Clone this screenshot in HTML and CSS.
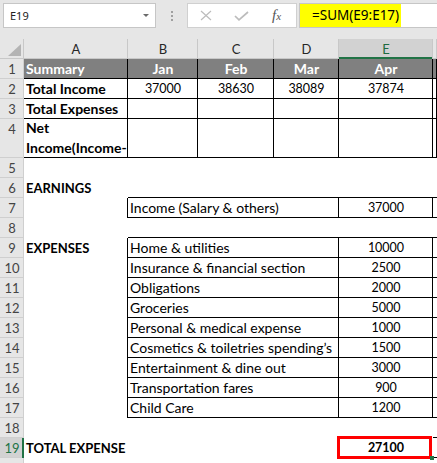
FILE: index.html
```html
<!DOCTYPE html>
<html>
<head>
<meta charset="utf-8">
<link rel="stylesheet" href="styles.css">
</head>
<body>
<div class="toolbar">
  <div class="namebox"><span>E19</span><span class="caret"></span></div>
  <div class="grip"><i></i><i></i><i></i></div>
  <div class="fbtns">
    <svg class="ico-x" width="12" height="11" viewBox="0 0 12 11"><path d="M1 1 L11 10 M11 1 L1 10" stroke="#bcbcbc" stroke-width="1.2" fill="none"/></svg>
    <svg class="ico-ok" width="15" height="10" viewBox="0 0 15 10"><path d="M1 5 L5 8.8 L14 1" stroke="#bcbcbc" stroke-width="1.7" fill="none"/></svg>
    <span class="fx">f<span class="fx-x">x</span></span>
  </div>
  <div class="finput"><span class="formula">=SUM(E9:E17)</span></div>
</div>

<div class="sheet">
  <div class="corner"><span class="tri"></span></div>
  <div class="ch">A</div><div class="ch">B</div><div class="ch">C</div><div class="ch">D</div><div class="ch sel">E</div><div class="ch"></div>

  <div class="rh">1</div>
  <div class="c sum lrb">Summary</div><div class="c sum ctr lrb">Jan</div><div class="c sum ctr lrb">Feb</div><div class="c sum ctr lrb">Mar</div><div class="c sum ctr lrb">Apr</div><div class="c sum lrb"></div>

  <div class="rh">2</div>
  <div class="c bold lrb">Total Income</div><div class="c num ctr lrb">37000</div><div class="c num ctr lrb">38630</div><div class="c num ctr lrb">38089</div><div class="c num ctr lrb">37874</div><div class="c lrb"></div>

  <div class="rh">3</div>
  <div class="c bold lrb">Total Expenses</div><div class="c lrb"></div><div class="c lrb"></div><div class="c lrb"></div><div class="c lrb"></div><div class="c lrb"></div>

  <div class="rh">4</div>
  <div class="c bold lrb wrap"><span>Net<br>Income(Income-</span></div><div class="c lrb"></div><div class="c lrb"></div><div class="c lrb"></div><div class="c lrb"></div><div class="c lrb"></div>

  <div class="rh">5</div>
  <div class="c"></div><div class="c"></div><div class="c"></div><div class="c"></div><div class="c"></div><div class="c"></div>

  <div class="rh">6</div>
  <div class="c bold caps">EARNINGS</div><div class="c lb"></div><div class="c lb"></div><div class="c lb"></div><div class="c lb"></div><div class="c lb"></div>

  <div class="rh">7</div>
  <div class="c lr"></div><div class="c m3 lrb">Income (Salary &amp; others)</div><div class="c num ctr lrb">37000</div><div class="c lb"></div>

  <div class="rh">8</div>
  <div class="c"></div><div class="c lb"></div><div class="c lb"></div><div class="c lb"></div><div class="c lb"></div><div class="c lb"></div>

  <div class="rh">9</div>
  <div class="c bold caps lr">EXPENSES</div><div class="c m3 lrb">Home &amp; utilities</div><div class="c num ctr lrb">10000</div><div class="c lb"></div>

  <div class="rh">10</div>
  <div class="c lr"></div><div class="c m3 lrb">Insurance &amp; financial section</div><div class="c num ctr lrb">2500</div><div class="c lb"></div>

  <div class="rh">11</div>
  <div class="c lr"></div><div class="c m3 lrb">Obligations</div><div class="c num ctr lrb">2000</div><div class="c lb"></div>

  <div class="rh">12</div>
  <div class="c lr"></div><div class="c m3 lrb">Groceries</div><div class="c num ctr lrb">5000</div><div class="c lb"></div>

  <div class="rh">13</div>
  <div class="c lr"></div><div class="c m3 lrb">Personal &amp; medical expense</div><div class="c num ctr lrb">1000</div><div class="c lb"></div>

  <div class="rh">14</div>
  <div class="c lr"></div><div class="c m3 lrb">Cosmetics &amp; toiletries spending’s</div><div class="c num ctr lrb">1500</div><div class="c lb"></div>

  <div class="rh">15</div>
  <div class="c lr"></div><div class="c m3 lrb">Entertainment &amp; dine out</div><div class="c num ctr lrb">3000</div><div class="c lb"></div>

  <div class="rh">16</div>
  <div class="c lr"></div><div class="c m3 lrb">Transportation fares</div><div class="c num ctr lrb">900</div><div class="c lb"></div>

  <div class="rh">17</div>
  <div class="c lr"></div><div class="c m3 lrb">Child Care</div><div class="c num ctr lrb">1200</div><div class="c lb"></div>

  <div class="rh">18</div>
  <div class="c"></div><div class="c"></div><div class="c"></div><div class="c"></div><div class="c"></div><div class="c lb"></div>

  <div class="rh sel">19</div>
  <div class="c bold caps spill">TOTAL EXPENSE</div><div class="c"></div><div class="c"></div><div class="c"></div><div class="c num bold ctr tot">27100</div><div class="c lb"></div>

  <div class="rh"></div>
  <div class="c"></div><div class="c"></div><div class="c"></div><div class="c"></div><div class="c"></div><div class="c"></div>
</div>
</body>
</html>
```

FILE: styles.css
```css
* { box-sizing: border-box; }

body {
  margin: 0;
  width: 437px;
  height: 463px;
  overflow: hidden;
  background: #ffffff;
  font-family: Lato, "Open Sans", sans-serif;
}

/* ---------- formula bar ---------- */
.toolbar {
  height: 39px;
  background: #e6e6e6;
  display: flex;
  align-items: flex-start;
  padding: 3px 0 0 3px;
  font-family: "Noto Sans", "Open Sans", sans-serif;
}

.namebox {
  width: 153px;
  height: 25px;
  background: #fff;
  border: 1px solid #c6c6c6;
  display: flex;
  align-items: center;
  justify-content: space-between;
  padding: 0 6px;
  font-size: 11px;
  color: #222;
}

.caret {
  width: 0;
  height: 0;
  border-left: 3px solid transparent;
  border-right: 3px solid transparent;
  border-top: 3px solid #6a6a6a;
}

.grip {
  width: 31px;
  height: 25px;
  display: flex;
  flex-direction: column;
  align-items: center;
  gap: 2px;
  padding-top: 8px;
}

.grip i {
  display: block;
  width: 2px;
  height: 2px;
  background: #a0a0a0;
}

.fbtns {
  width: 110px;
  height: 25px;
  background: #fff;
  border: 1px solid #d0d0d0;
  display: flex;
  align-items: center;
  padding-left: 12px;
}

.ico-ok { margin-left: 22px; }

.fx {
  margin-left: 23px;
  font-family: "Liberation Serif", serif;
  font-style: italic;
  font-size: 15px;
  color: #555;
  line-height: 1;
}

.fx-x { font-size: 11px; }

.finput {
  flex: 1;
  margin-left: 2px;
  height: 25px;
  background: #fff;
  border: 1px solid #c6c6c6;
  border-right: none;
}

.formula {
  display: block;
  width: 101px;
  height: 23px;
  background: #ffff00;
  padding-left: 12px;
  font-size: 13.5px;
  line-height: 23px;
  color: #000;
}

/* ---------- sheet grid ---------- */
.sheet {
  width: 437px;
  display: grid;
  grid-template-columns: 24px 104px 70px 76px 65px 94px 1fr;
  grid-template-rows: repeat(4, 20px) 39px repeat(16, 20px);
  font-size: 14px;
  color: #000;
}

.corner {
  position: relative;
  background: #e6e6e6;
  box-shadow: inset -1px -1px #c8c8c8;
}

.tri {
  position: absolute;
  right: 3px;
  bottom: 3px;
  width: 0;
  height: 0;
  border-left: 13px solid transparent;
  border-bottom: 12px solid #b4b4b4;
}

.ch {
  background: #e6e6e6;
  box-shadow: inset -1px -1px #c8c8c8;
  text-align: center;
  line-height: 20px;
  font-size: 13px;
  color: #262626;
}

.ch.sel {
  background: #d2d2d2;
  color: #1e6b40;
  box-shadow: inset -1px 0 #c8c8c8, inset 0 -2px #217346;
}

.rh {
  background: #e6e6e6;
  box-shadow: inset -1px -1px #cfcfcf;
  text-align: center;
  line-height: 20px;
  font-size: 13px;
  color: #444;
}

.rh.sel {
  background: #d2d2d2;
  color: #217346;
  box-shadow: inset -2px 0 #217346, inset 0 -1px #cfcfcf;
}

.c {
  line-height: 20px;
  padding: 0 2px;
  white-space: nowrap;
  overflow: hidden;
}

.bold { font-weight: 700; }
.caps { font-size: 13px; }
.num { font-size: 12.5px; }
.ctr { text-align: center; }
.m3 { grid-column: span 3; }
.spill { overflow: visible; }

.sum {
  background: #808080;
  color: #fff;
  font-weight: 700;
}

.lr { box-shadow: inset -1px 0 #000; }
.lb { box-shadow: inset 0 -1px #000; }
.lrb { box-shadow: inset -1px -1px #000; }

.wrap {
  display: flex;
  flex-direction: column;
  justify-content: flex-end;
}

.tot {
  position: relative;
  overflow: visible;
}

.tot::after {
  content: "";
  position: absolute;
  left: -2px;
  top: -2px;
  right: 1px;
  bottom: -1px;
  border: 3px solid #ff0000;
}

.tot::before {
  content: "";
  position: absolute;
  left: 91px;
  top: 18px;
  width: 4px;
  height: 4px;
  background: #217346;
  z-index: 1;
}
```
